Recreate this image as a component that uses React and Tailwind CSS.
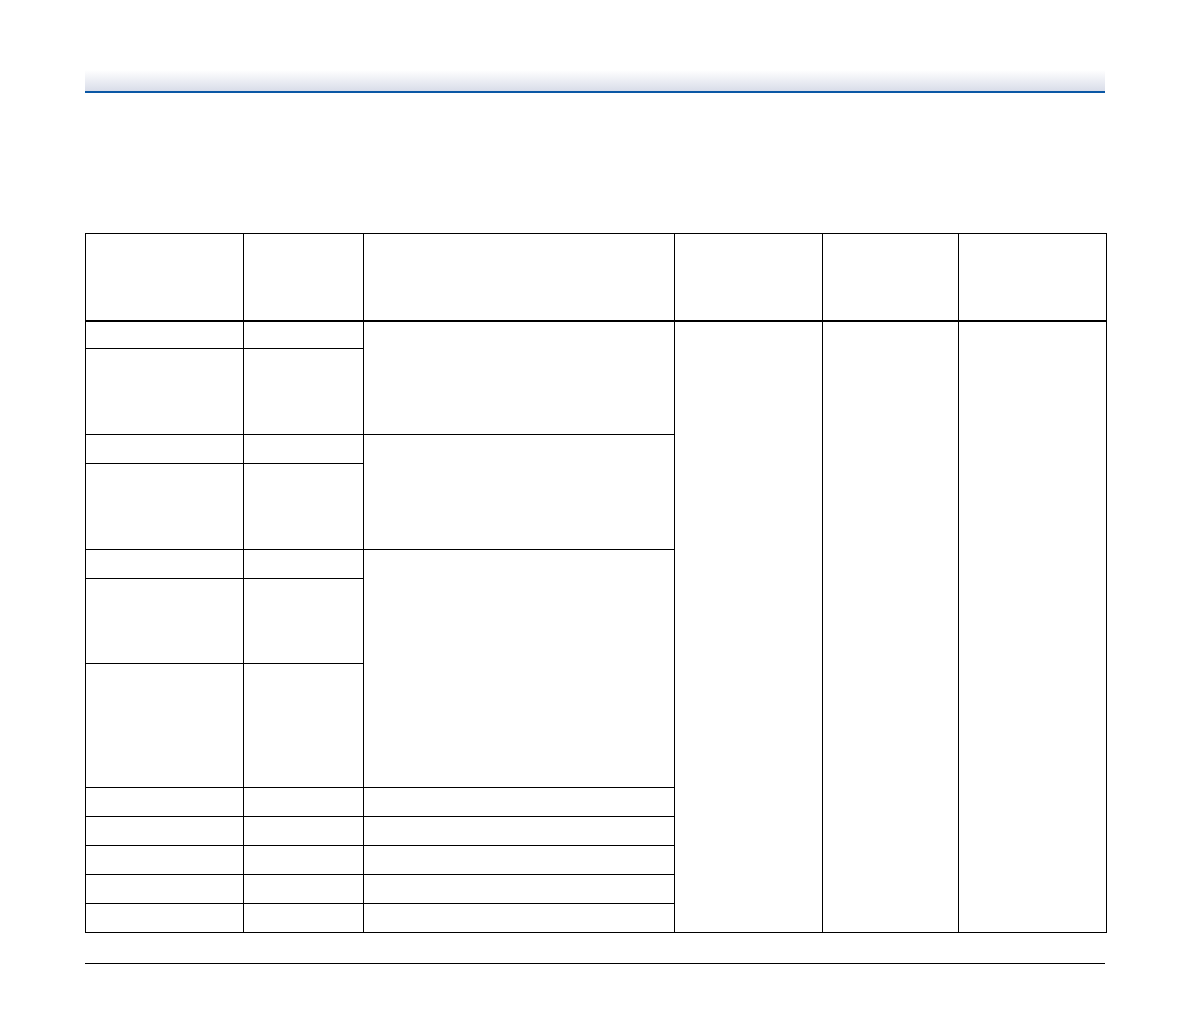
import React from 'react';

const cell = 'border border-black p-0';

const App = () => {
  const smallRows = [787, 816, 845, 874, 903];

  return (
    <div className="w-[1190px] h-[1020px] bg-white relative font-['Liberation_Sans',sans-serif]">
      <div className="pt-[70px] px-[85px]">
        <div className="h-[21px] bg-gradient-to-b from-white to-[#d9dde9]" />
        <div className="h-[2px] bg-[#0a57a5]" />
      </div>

      <div className="pt-[140px] pl-[85px]">
        <table className="border-collapse table-fixed w-[1021px]">
          <colgroup>
            <col className="w-[158px]" />
            <col className="w-[120px]" />
            <col className="w-[311px]" />
            <col className="w-[148px]" />
            <col className="w-[136px]" />
            <col className="w-[148px]" />
          </colgroup>
          <thead>
            <tr className="h-[87px]">
              <th className={`${cell} border-b-2`} />
              <th className={`${cell} border-b-2`} />
              <th className={`${cell} border-b-2`} />
              <th className={`${cell} border-b-2`} />
              <th className={`${cell} border-b-2`} />
              <th className={`${cell} border-b-2`} />
            </tr>
          </thead>
          <tbody>
            <tr className="h-[28px]">
              <td className={cell} />
              <td className={cell} />
              <td className={cell} rowSpan={2} />
              <td className={cell} rowSpan={12} />
              <td className={cell} rowSpan={12} />
              <td className={cell} rowSpan={12} />
            </tr>
            <tr className="h-[86px]">
              <td className={cell} />
              <td className={cell} />
            </tr>
            <tr className="h-[29px]">
              <td className={cell} />
              <td className={cell} />
              <td className={cell} rowSpan={2} />
            </tr>
            <tr className="h-[86px]">
              <td className={cell} />
              <td className={cell} />
            </tr>
            <tr className="h-[29px]">
              <td className={cell} />
              <td className={cell} />
              <td className={cell} rowSpan={3} />
            </tr>
            <tr className="h-[85px]">
              <td className={cell} />
              <td className={cell} />
            </tr>
            <tr className="h-[124px]">
              <td className={cell} />
              <td className={cell} />
            </tr>
            {smallRows.map((y) => (
              <tr key={y} className="h-[29px]">
                <td className={cell} />
                <td className={cell} />
                <td className={cell} />
              </tr>
            ))}
          </tbody>
        </table>
      </div>

      <div className="pt-[30px] px-[85px]">
        <div className="h-px bg-black" />
      </div>
    </div>
  );
};

export default App;
